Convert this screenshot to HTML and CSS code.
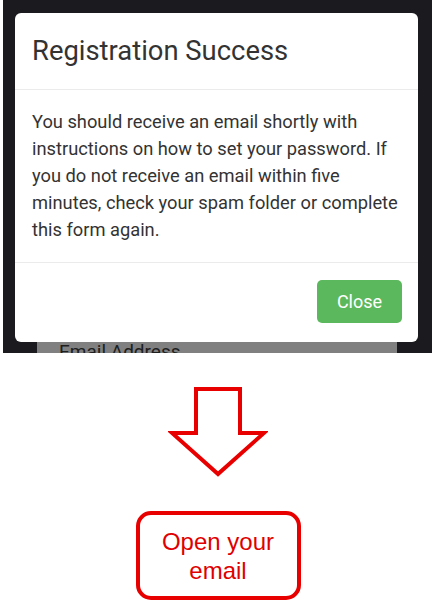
FILE: index.html
```html
<!DOCTYPE html>
<html lang="en">
<head>
  <meta charset="UTF-8" />
  <meta name="viewport" content="width=device-width, initial-scale=1.0"/>
  <title>Registration Success</title>
  <link rel="stylesheet" href="styles.css">
</head>
<body>

<div class="screen">
  <div class="modal">
    <div class="modal-header">
      <h1>Registration Success</h1>
    </div>
    <div class="modal-body">
      <p>You should receive an email shortly with instructions on how to set your password. If you do not receive an email within five minutes, check your spam folder or complete this form again.</p>
    </div>
    <div class="modal-footer">
      <button class="close-btn">Close</button>
    </div>
  </div>
  <!-- form behind the modal -->
  <div class="field">Email Address</div>
</div>

<div class="next-step">
  <svg class="arrow" width="100" height="96" viewBox="0 0 100 96">
    <polygon points="28,5 72,5 72,49 96,49 50,90 4,49 28,49" fill="#fff" stroke="#e80000" stroke-width="4" stroke-linejoin="miter"/>
  </svg>
  <div class="callout">Open your<br>email</div>
</div>

</body>
</html>
```

FILE: styles.css
```css
body {
  margin: 0;
  background: #fff;
  font-family: Roboto, 'Noto Sans', sans-serif;
  color: #333;
}

.screen {
  margin-left: 3px;
  width: 429px;
  height: 353px;
  background: #1b1b1f;
  padding: 13px 0 0 12px;
  box-sizing: border-box;
  display: flex;
  flex-direction: column;
  overflow: hidden;
}

.modal {
  width: 403px;
  background: #fff;
  border-radius: 6px;
  flex-shrink: 0;
}

.modal-header {
  height: 76px;
  display: flex;
  align-items: center;
  padding: 0 17px;
  border-bottom: 1px solid #ebebeb;
}

.modal-header h1 {
  margin: 0;
  font-size: 27.4px;
  font-weight: 400;
  color: #333;
}

.modal-body {
  padding: 18px 14px 19px 17px;
  border-bottom: 1px solid #ebebeb;
}

.modal-body p {
  margin: 0;
  font-size: 18.3px;
  line-height: 27px;
}

.modal-footer {
  height: 79px;
  display: flex;
  justify-content: flex-end;
  align-items: center;
  padding: 0 16px 2px 0;
  box-sizing: border-box;
}

.close-btn {
  width: 85px;
  height: 43px;
  border: none;
  border-radius: 5px;
  background: #5cb85c;
  color: #fff;
  font-family: Roboto, sans-serif;
  font-size: 18px;
}

.field {
  margin-left: 22px;
  width: 360px;
  height: 12px;
  background: #808080;
  padding-left: 22px;
  box-sizing: border-box;
  font-size: 19px;
  line-height: 20px;
  color: #1e1e1e;
  overflow: hidden;
}

.next-step {
  display: flex;
  flex-direction: column;
  align-items: center;
}

.arrow {
  display: block;
  margin-top: 31px;
}

.callout {
  margin-top: 31px;
  width: 165px;
  height: 89px;
  box-sizing: border-box;
  border: 4px solid #e80000;
  border-radius: 15px;
  display: flex;
  align-items: center;
  justify-content: center;
  text-align: center;
  font-family: 'Liberation Sans', Arial, sans-serif;
  font-size: 24px;
  line-height: 29px;
  color: #e00000;
}
```
